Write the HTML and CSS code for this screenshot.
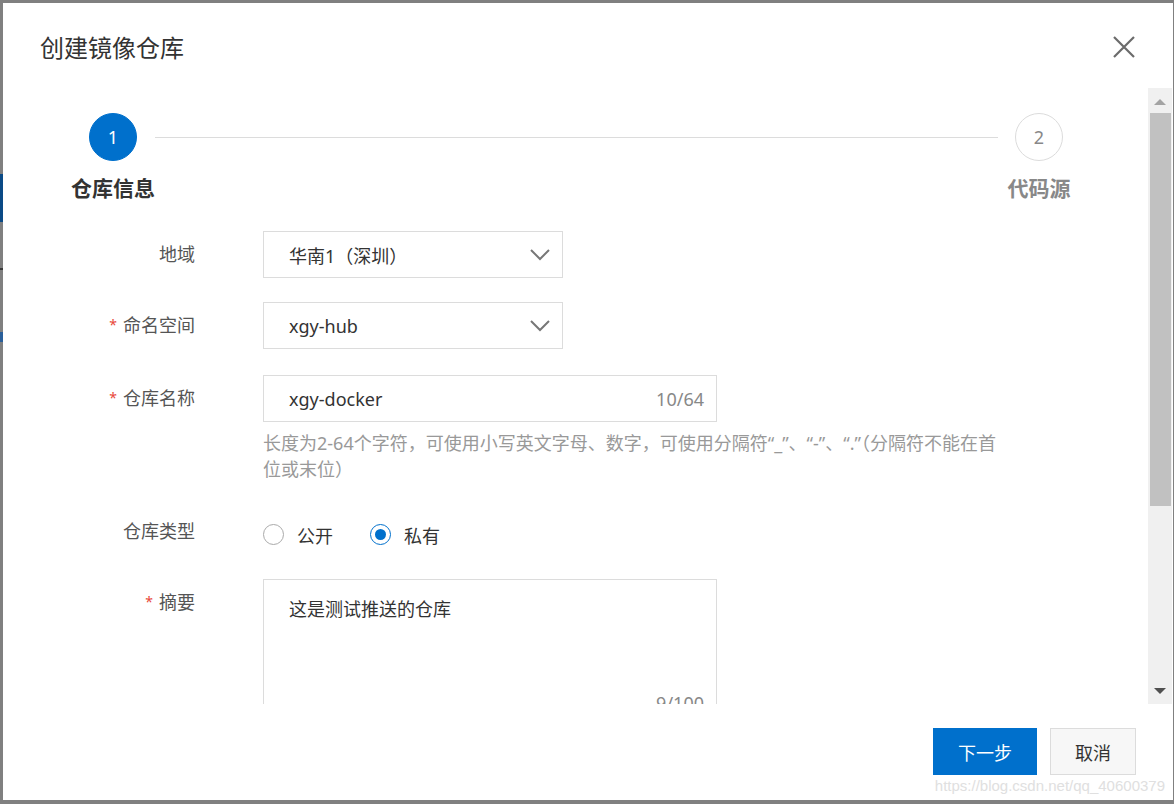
FILE: index.html
```html
<!DOCTYPE html>
<html lang="zh-CN">
<head>
<meta charset="utf-8">
<title>创建镜像仓库</title>
<link rel="stylesheet" href="styles.css">
</head>
<body>
<div class="screen">
  <div class="page-edge">
    <span class="edge-nav"></span>
    <span class="edge-mark"></span>
    <span class="edge-link"></span>
  </div>
  <div class="dialog">
    <div class="dialog-header">
      <h1 class="dialog-title">创建镜像仓库</h1>
      <button class="close" type="button" aria-label="关闭">
        <svg width="22" height="22" viewBox="0 0 22 22"><path d="M1 1L21 21M21 1L1 21" stroke="#6b6b6b" stroke-width="2.2" fill="none"/></svg>
      </button>
    </div>
    <div class="dialog-body">
      <div class="scroll-content">
        <div class="steps">
          <div class="step step-first">
            <span class="step-circle active">1</span>
            <span class="step-label active">仓库信息</span>
          </div>
          <div class="step-line"></div>
          <div class="step step-last">
            <span class="step-circle">2</span>
            <span class="step-label">代码源</span>
          </div>
        </div>
        <div class="form">
          <div class="form-item">
            <label class="form-label">地域</label>
            <div class="form-control">
              <div class="select">
                <span class="select-value">华南1（深圳）</span>
                <svg class="chevron" width="20" height="12" viewBox="0 0 20 12"><path d="M1 1L10 10L19 1" stroke="#777" stroke-width="2" fill="none"/></svg>
              </div>
            </div>
          </div>
          <div class="form-item item-ns">
            <label class="form-label"><span class="req">*</span>命名空间</label>
            <div class="form-control">
              <div class="select">
                <span class="select-value">xgy-hub</span>
                <svg class="chevron" width="20" height="12" viewBox="0 0 20 12"><path d="M1 1L10 10L19 1" stroke="#777" stroke-width="2" fill="none"/></svg>
              </div>
            </div>
          </div>
          <div class="form-item">
            <label class="form-label"><span class="req">*</span>仓库名称</label>
            <div class="form-control">
              <div class="input">
                <span class="input-value">xgy-docker</span>
                <span class="counter">10/64</span>
              </div>
              <p class="hint">长度为2-64个字符，可使用小写英文字母、数字，可使用分隔符“_”、“-”、“.”（分隔符不能在首位或末位）</p>
            </div>
          </div>
          <div class="form-item">
            <label class="form-label">仓库类型</label>
            <div class="form-control">
              <div class="radio-group">
                <span class="radio"><span class="radio-dot"></span>公开</span>
                <span class="radio checked"><span class="radio-dot"></span>私有</span>
              </div>
            </div>
          </div>
          <div class="form-item">
            <label class="form-label"><span class="req">*</span>摘要</label>
            <div class="form-control">
              <div class="textarea">
                <span class="textarea-value">这是测试推送的仓库</span>
                <span class="counter counter-bottom">9/100</span>
              </div>
            </div>
          </div>
        </div>
      </div>
      <div class="scrollbar">
        <span class="sb-btn"><span class="tri up"></span></span>
        <span class="sb-thumb"></span>
        <span class="sb-rest"></span>
        <span class="sb-btn"><span class="tri down"></span></span>
      </div>
    </div>
    <div class="dialog-footer">
      <button class="btn btn-primary" type="button">下一步</button>
      <button class="btn btn-default" type="button">取消</button>
      <span class="watermark">https://blog.csdn.net/qq_40600379</span>
    </div>
  </div>
</div>
</body>
</html>
```

FILE: styles.css
```css
* { box-sizing: border-box; }
html, body {
  margin: 0;
  padding: 0;
  width: 1174px;
  height: 804px;
  overflow: hidden;
  background: #808080;
  font-family: "Noto Sans", "Noto Sans CJK SC", sans-serif;
}
.screen {
  display: flex;
  height: 804px;
}
.page-edge {
  width: 3px;
  flex: none;
  display: flex;
  flex-direction: column;
}
.edge-nav {
  display: block;
  height: 48px;
  margin-top: 174px;
  background: #0b4a86;
}
.edge-mark {
  display: block;
  height: 2px;
  margin-top: 46px;
  background: #3a3a3a;
}
.edge-link {
  display: block;
  height: 10px;
  margin-top: 62px;
  background: #2a5f9a;
}
.dialog {
  flex: 1;
  margin: 3px 1px 4px 0;
  background: #fff;
  display: flex;
  flex-direction: column;
  position: relative;
}
.dialog-header {
  height: 85px;
  flex: none;
  display: flex;
  align-items: center;
  justify-content: space-between;
  padding: 5px 38px 0 37px;
}
.dialog-title {
  margin: 0;
  font-size: 24px;
  font-weight: normal;
  color: #333;
  line-height: 1;
}
.close {
  border: 0;
  background: none;
  padding: 0;
  width: 22px;
  height: 22px;
  display: flex;
  margin-top: -2px;
}
.dialog-body {
  height: 616px;
  flex: none;
  display: flex;
}
.scroll-content {
  flex: 1;
  overflow: hidden;
}
.scrollbar {
  width: 24px;
  margin-right: 1px;
  flex: none;
  background: #f0f0f0;
  display: flex;
  flex-direction: column;
  align-items: center;
}
.sb-btn {
  height: 25px;
  width: 100%;
  display: flex;
  align-items: center;
  justify-content: center;
  flex: none;
}
.tri {
  width: 0;
  height: 0;
  border-left: 6px solid transparent;
  border-right: 6px solid transparent;
}
.tri.up { border-bottom: 6px solid #a3a3a3; margin-top: 2px; }
.tri.down { border-top: 6px solid #505050; margin-top: -2px; }
.sb-thumb {
  width: 21px;
  height: 393px;
  background: #c1c1c1;
  flex: none;
}
.sb-rest { flex: 1; }

/* steps */
.steps {
  display: flex;
  align-items: flex-start;
  padding: 25px 68px 0;
}
.step {
  display: flex;
  flex-direction: column;
  align-items: center;
  flex: none;
}
.step-first { width: 84px; }
.step-last { width: 82px; }
.step-circle {
  width: 48px;
  height: 48px;
  border-radius: 50%;
  border: 1px solid #dcdcdc;
  color: #888;
  font-size: 18px;
  display: flex;
  align-items: center;
  justify-content: center;
  font-family: "Noto Sans", sans-serif;
}
.step-circle.active {
  background: #0070cc;
  border-color: #0070cc;
  color: #fff;
}
.step-label {
  margin-top: 13px;
  font-size: 21px;
  line-height: 28px;
  font-weight: bold;
  color: #888;
  white-space: nowrap;
}
.step-label.active { color: #333; }
.step-line {
  flex: 1;
  height: 1px;
  background: #dcdcdc;
  margin-top: 24px;
}

/* form */
.form {
  margin-top: 29px;
}
.form-item {
  display: grid;
  grid-template-columns: 192px 1fr;
  column-gap: 68px;
  margin-bottom: 24px;
}
.item-ns { margin-bottom: 25px; }
.form-label {
  text-align: right;
  font-size: 18px;
  line-height: 47px;
  color: #555;
  white-space: nowrap;
}
.req {
  color: #e8473a;
  font-size: 14px;
  margin-right: 6px;
  position: relative;
  top: -2px;
}
.select {
  width: 300px;
  height: 47px;
  border: 1px solid #dcdcdc;
  display: flex;
  align-items: center;
  justify-content: space-between;
  padding: 0 12px 0 25px;
}
.select-value, .input-value, .textarea-value {
  font-size: 18px;
  color: #333;
}
.chevron { margin-top: 1px; }
.input {
  width: 454px;
  height: 47px;
  border: 1px solid #dcdcdc;
  display: flex;
  align-items: center;
  padding: 0 12px 0 25px;
  position: relative;
}
.counter {
  position: absolute;
  right: 12px;
  top: 50%;
  transform: translateY(-50%);
  font-size: 18px;
  color: #888;
}
.hint {
  margin: 8px 0 2px;
  width: 742px;
  font-size: 18px;
  line-height: 26px;
  color: #999;
}
.radio-group {
  height: 47px;
  padding-top: 6px;
  display: flex;
  align-items: center;
  gap: 37px;
}
.radio {
  display: flex;
  align-items: center;
  gap: 13px;
  font-size: 18px;
  color: #333;
}
.radio-dot {
  width: 21px;
  height: 21px;
  border-radius: 50%;
  border: 1px solid #aaa;
  background: #fff;
  display: flex;
  align-items: center;
  justify-content: center;
}
.radio.checked .radio-dot {
  border-color: #0070cc;
}
.radio.checked .radio-dot::after {
  content: "";
  width: 11px;
  height: 11px;
  border-radius: 50%;
  background: #0070cc;
}
.textarea {
  width: 454px;
  height: 150px;
  border: 1px solid #dcdcdc;
  padding: 16px 25px;
  position: relative;
  line-height: 26px;
}
.counter-bottom {
  top: auto;
  bottom: 12px;
  transform: none;
}

/* footer */
.dialog-footer {
  height: 96px;
  flex: none;
  display: flex;
  justify-content: flex-end;
  align-items: flex-start;
  gap: 13px;
  padding: 24px 37px 0 0;
}
.btn {
  height: 47px;
  font-size: 18px;
  font-family: "Noto Sans", "Noto Sans CJK SC", sans-serif;
  border: 1px solid #dcdcdc;
  padding: 0;
}
.btn-primary {
  width: 104px;
  background: #0070cc;
  border-color: #0070cc;
  color: #fff;
}
.btn-default {
  width: 86px;
  background: #f7f7f7;
  color: #333;
}
.watermark {
  position: absolute;
  right: 8px;
  bottom: 5px;
  font-family: "Liberation Sans", Arial, sans-serif;
  font-size: 15px;
  line-height: 18px;
  color: #e0e0e0;
}
```
